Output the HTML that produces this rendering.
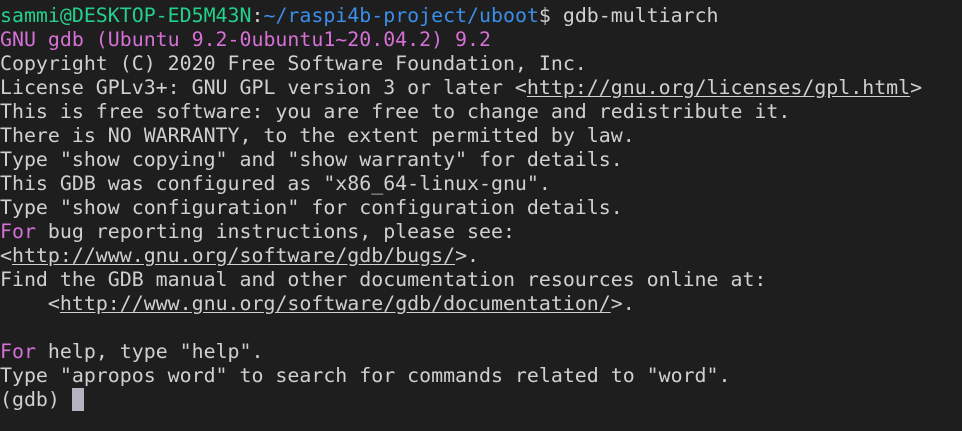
<!DOCTYPE html>
<html><head><meta charset="utf-8"><style>
html,body{margin:0;padding:0;background:#1e1e1e;width:962px;height:431px;overflow:hidden}
pre{margin:0;position:absolute;left:0;top:4px;font-family:"DejaVu Sans Mono","Liberation Mono",monospace;font-size:19.9px;line-height:24px;color:#d0d0d0;white-space:pre}
.g{color:#23d18b}.b{color:#3b8eea}.m{color:#d670d6}
u{text-decoration:underline;text-underline-offset:2px}
.c{display:inline-block;width:12px;height:23px;background:#b4b4c0;vertical-align:-5px}
</style></head><body>
<pre><span class="g">sammi@DESKTOP-ED5M43N</span>:<span class="b">~/raspi4b-project/uboot</span>$ gdb-multiarch
<span class="m">GNU gdb (Ubuntu 9.2-0ubuntu1~20.04.2) 9.2</span>
Copyright (C) 2020 Free Software Foundation, Inc.
License GPLv3+: GNU GPL version 3 or later &lt;<u>http://gnu.org/licenses/gpl.html</u>&gt;
This is free software: you are free to change and redistribute it.
There is NO WARRANTY, to the extent permitted by law.
Type "show copying" and "show warranty" for details.
This GDB was configured as "x86_64-linux-gnu".
Type "show configuration" for configuration details.
<span class="m">For</span> bug reporting instructions, please see:
&lt;<u>http://www.gnu.org/software/gdb/bugs/</u>&gt;.
Find the GDB manual and other documentation resources online at:
    &lt;<u>http://www.gnu.org/software/gdb/documentation/</u>&gt;.

<span class="m">For</span> help, type "help".
Type "apropos word" to search for commands related to "word".
(gdb) <span class="c"></span></pre>
</body></html>
